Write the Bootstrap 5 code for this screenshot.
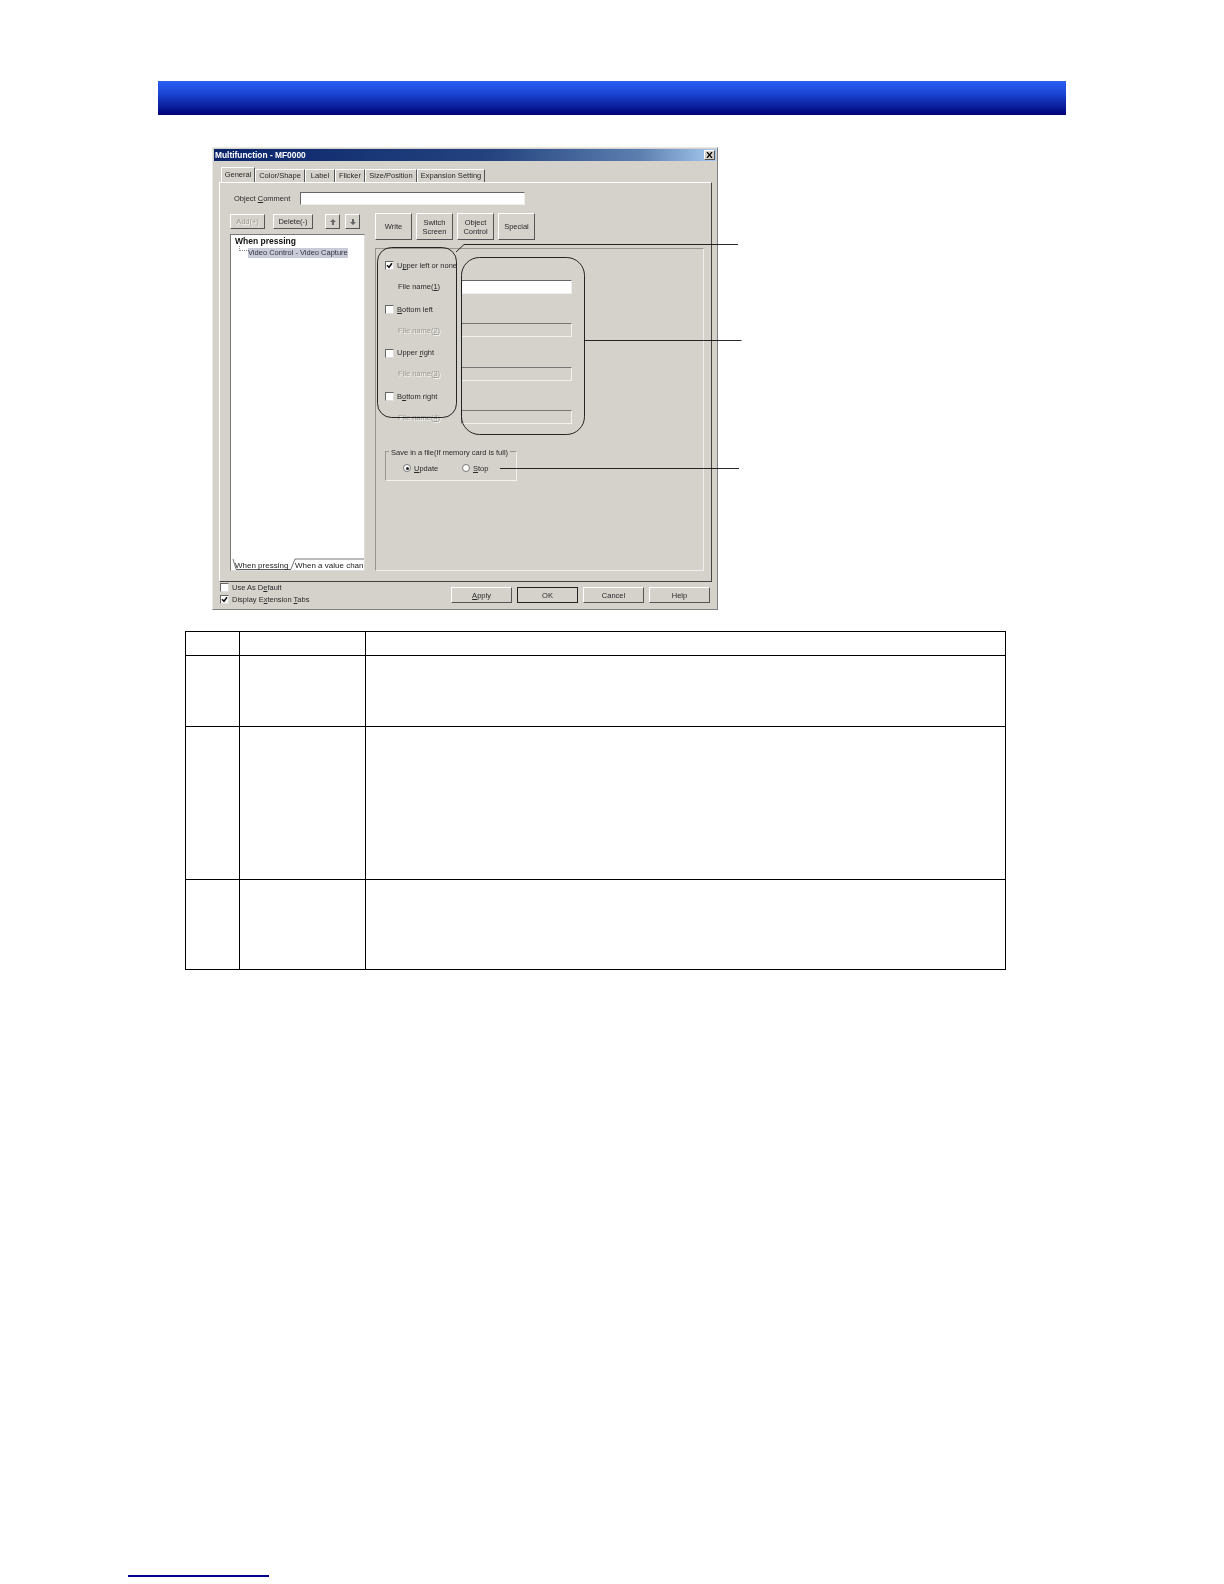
<!DOCTYPE html>
<html lang="en">
<head>
<meta charset="utf-8">
<title>Multifunction</title>
<link href="https://cdn.jsdelivr.net/npm/bootstrap@5.3.0/dist/css/bootstrap.min.css" rel="stylesheet">
<style>
body{background:#fff;font-family:"Liberation Sans",Arial,sans-serif;font-size:7.5px;color:#2a2a2a;line-height:1}
.sheet{height:1584px;padding-top:81px;position:relative;overflow:hidden}
.banner{margin-left:158px;width:908px;height:34px;background:linear-gradient(#2b5ff2,#1c46d6 35%,#0a1f9c 75%,#00007a)}
.dlg{position:relative;margin:32px 0 0 212px;width:506px;height:463px;background:#d5d2cb;border:1px solid #808080;border-top-color:#e8e8e4;border-left-color:#e8e8e4;padding:1px;filter:blur(.3px)}
.ttlbar{height:12px;padding:0 1px;background:linear-gradient(90deg,#0a246a,#24437f 55%,#5d7fb0 85%,#a6caf0);color:#fff;font-weight:700;font-size:8.4px}
.xbtn{width:11px;height:10px;background:#d4d0c8;border:1px solid #555;border-top-color:#fff;border-left-color:#fff}
.tabline{margin:6px 0 0 7px;height:15px;align-items:flex-end}
.wtab{height:13px;line-height:12px;text-align:center;background:#d5d2cb;border:1px solid #fff;border-right-color:#555;border-bottom:0;white-space:nowrap}
.wtab.on{height:15px;line-height:13px;width:34px;position:relative;z-index:1}
.tb1{width:50px}.tb2{width:30px}.tb3{width:30px}.tb4{width:52px}.tb5{width:68px}
.tabpane{margin-left:5px;width:493px;height:400px;border:1px solid #fff;border-right-color:#444;border-bottom-color:#444;padding:9px 0 0 10px}
.cmt{height:13px;margin-bottom:8px}
.cmt-l{width:70px;padding-left:4px}
.txt{background:#fff;border:1px solid #666;border-right-color:#eee;border-bottom-color:#eee}
.cmt .txt{width:225px;height:13px}
.leftcol{width:135px;margin-right:10px}
.tools{height:15px;margin:1px 0 5px}
.wbtn{background:#d5d2cb;border:1px solid #fff;border-right-color:#555;border-bottom-color:#555;color:#2a2a2a;padding:0;text-align:center;line-height:1.2}
.off{color:#9c9a94;text-shadow:1px 1px 0 #f4f4f0}
.b-add{width:35px;height:15px;margin-right:8px}.b-del{width:40px;height:15px;margin-right:12px}.b-up{width:15px;height:15px;margin-right:5px}.b-dn{width:15px;height:15px}
.tree{position:relative;height:337px;background:#fff;border:1px solid #777;border-right-color:#ddd;border-bottom-color:#ddd;padding:2px 4px;color:#222}
.tree b{display:block;font-size:8.5px;height:8.500px;margin-bottom:2.500px;color:#111}
.leaf{margin-left:13px;width:100px;height:10px;line-height:10px;background:#c9ccd8;color:#334;white-space:nowrap}
.dots{position:absolute;left:8px;top:11px;width:8px;height:5px;border-left:1px dotted #888;border-bottom:1px dotted #888}
.subtabs{position:absolute;left:0;right:0;bottom:0;height:13px;line-height:13px;white-space:nowrap;font-size:8px}
.subtabs svg{position:absolute;left:0;top:0}
.st1{position:absolute;left:4px;top:1.500px}.st2{position:absolute;left:64px;top:1.500px}
.cmdrow{height:27px;margin-bottom:8px;gap:4px}
.cmd{width:37px;height:27px}
.panel{width:329px;height:323px;border:1px solid #97958e;border-bottom-color:#eee;border-right-color:#eee;padding:6px 0 0 9px}
.prow{height:21.8px}
.chk{width:9px;height:9px;background:#fff;border:1px solid #666;border-right-color:#ddd;border-bottom-color:#ddd;margin-right:3px;flex:none;display:block}
.fl{width:76px;padding-left:13px;margin-top:-2px}
.prow .txt{width:111px;height:14px;margin-top:-2px}
.prow .txt.dis{background:#d5d2cb;border-color:#777 #f2f2ee #f2f2ee #777}
.grp{position:relative;margin-top:21.6px;width:132px;height:30px;border:1px solid #98968f;border-right-color:#f2f2ee;border-bottom-color:#f2f2ee;padding-top:5px}
.grp-t{position:absolute;left:3px;top:-3px;padding:0 2px;background:#d5d2cb;white-space:nowrap}
.rad{width:8px;height:8px;border-radius:50%;background:#fff;border:1px solid #777;display:block;flex:none;margin-right:3px;position:relative}
.rad.sel::after{content:"";position:absolute;left:1.5px;top:1.5px;width:3px;height:3px;border-radius:50%;background:#222}
.r1{margin-left:17px;width:59px}
.foot{margin:0 0 0 6px;height:28px}
.fchk{width:231px}
.fchk>div{height:11.5px}
.fbtn{width:61px;height:16px;margin:5px 5px 0 0}
.fbtn.def{border:1.5px solid #222}
.over{position:absolute;left:-1px;top:-1px;pointer-events:none}
.spec{margin:21px 0 0 185px;width:821px;height:338px;border-collapse:collapse;table-layout:fixed}
.spec td{border:1px solid #000;padding:0}
.c1{width:54px}.c2{width:126px}
.h1{height:24px}.h2{height:71px}.h3{height:153px}.h4{height:90px}
.rule{position:absolute;left:128px;top:1575px;width:141px;height:1.5px;background:#00008b}
</style>
</head>
<body>
<div class="sheet">
  <div class="banner"></div>

  <div class="dlg">
    <div class="ttlbar d-flex justify-content-between align-items-center">
      <span>Multifunction - MF0000</span>
      <span class="xbtn d-flex align-items-center justify-content-center"><svg width="7" height="6" viewBox="0 0 7 6"><path d="M1 0l5 6M6 0L1 6" stroke="#000" stroke-width="1.2"/></svg></span>
    </div>
    <div class="tabline d-flex">
      <div class="wtab on">General</div>
      <div class="wtab tb1">Color/Shape</div>
      <div class="wtab tb2">Label</div>
      <div class="wtab tb3">Flicker</div>
      <div class="wtab tb4">Size/Position</div>
      <div class="wtab tb5">Expansion Setting</div>
    </div>
    <div class="tabpane">
      <div class="cmt d-flex align-items-center">
        <div class="cmt-l">Object <u>C</u>omment</div>
        <div class="txt"></div>
      </div>
      <div class="d-flex">
        <div class="leftcol">
          <div class="tools d-flex">
            <button class="wbtn b-add off">Add(+)</button>
            <button class="wbtn b-del">Delete(-)</button>
            <button class="wbtn b-up off"><svg width="8" height="8" viewBox="0 0 8 8"><path d="M4 1L1 4h2v3h2V4h2z" fill="#666"/></svg></button>
            <button class="wbtn b-dn off"><svg width="8" height="8" viewBox="0 0 8 8"><path d="M4 7L1 4h2V1h2v3h2z" fill="#666"/></svg></button>
          </div>
          <div class="tree">
            <b>When pressing</b>
            <span class="dots"></span>
            <div class="leaf">Video Control - Video Capture</div>
            <div class="subtabs">
              <svg width="134" height="13" viewBox="0 0 134 13"><path d="M2 2l3 10M64 2l-4 10M64 2h69" fill="none" stroke="#555" stroke-width=".8"/><path d="M5 12.500h55" stroke="#333" stroke-width=".8"/></svg>
              <span class="st1">When pressing</span>
              <span class="st2">When a value chan</span>
            </div>
          </div>
        </div>
        <div>
          <div class="cmdrow d-flex">
            <button class="wbtn cmd">Write</button>
            <button class="wbtn cmd">Switch<br>Screen</button>
            <button class="wbtn cmd">Object<br>Control</button>
            <button class="wbtn cmd">Special</button>
          </div>
          <div class="panel">
            <div class="prow d-flex align-items-center">
              <span class="chk"><svg class="d-block" width="7" height="7" viewBox="0 0 7 7"><path d="M1 3.2l2 2L6 1.2" fill="none" stroke="#111" stroke-width="1.6"/></svg></span>
              <span>U<u>p</u>per left or none</span>
            </div>
            <div class="prow d-flex align-items-center"><div class="fl">File name(<u>1</u>)</div><div class="txt"></div></div>
            <div class="prow d-flex align-items-center"><span class="chk"></span><span><u>B</u>ottom left</span></div>
            <div class="prow d-flex align-items-center"><div class="fl off">File name(<u>2</u>)</div><div class="txt dis"></div></div>
            <div class="prow d-flex align-items-center"><span class="chk"></span><span>Upper <u>r</u>ight</span></div>
            <div class="prow d-flex align-items-center"><div class="fl off">File name(<u>3</u>)</div><div class="txt dis"></div></div>
            <div class="prow d-flex align-items-center"><span class="chk"></span><span>B<u>o</u>ttom right</span></div>
            <div class="prow d-flex align-items-center"><div class="fl off">File name(<u>4</u>)</div><div class="txt dis"></div></div>
            <div class="grp d-flex align-items-center">
              <span class="grp-t">Save in a file(If memory card is full)</span>
              <div class="r1 d-flex align-items-center"><span class="rad sel"></span><span><u>U</u>pdate</span></div>
              <div class="d-flex align-items-center"><span class="rad"></span><span><u>S</u>top</span></div>
            </div>
          </div>
        </div>
      </div>
    </div>
    <div class="foot d-flex">
      <div class="fchk">
        <div class="d-flex align-items-center"><span class="chk"></span><span>Use As D<u>e</u>fault</span></div>
        <div class="d-flex align-items-center"><span class="chk"><svg class="d-block" width="7" height="7" viewBox="0 0 7 7"><path d="M1 3.2l2 2L6 1.2" fill="none" stroke="#111" stroke-width="1.6"/></svg></span><span>Display E<u>x</u>tension <u>T</u>abs</span></div>
      </div>
      <button class="wbtn fbtn"><u>A</u>pply</button>
      <button class="wbtn fbtn def">OK</button>
      <button class="wbtn fbtn">Cancel</button>
      <button class="wbtn fbtn">Help</button>
    </div>
    <svg class="over" width="540" height="459" viewBox="0 0 540 459">
      <g fill="none" stroke="#111" stroke-width=".9">
        <rect x="165.500" y="100.500" width="79" height="170" rx="14"/>
        <rect x="249.500" y="110.500" width="123" height="177" rx="18"/>
        <path d="M244 105l8-7.500h274M372.500 193.500h157M288 321.500h239"/>
      </g>
    </svg>
  </div>

  <table class="spec">
    <colgroup><col class="c1"><col class="c2"><col></colgroup>
    <tbody>
      <tr class="h1"><td></td><td></td><td></td></tr>
      <tr class="h2"><td></td><td></td><td></td></tr>
      <tr class="h3"><td></td><td></td><td></td></tr>
      <tr class="h4"><td></td><td></td><td></td></tr>
    </tbody>
  </table>

  <div class="rule"></div>
</div>
<script src="https://cdn.jsdelivr.net/npm/bootstrap@5.3.0/dist/js/bootstrap.bundle.min.js"></script>
</body>
</html>
